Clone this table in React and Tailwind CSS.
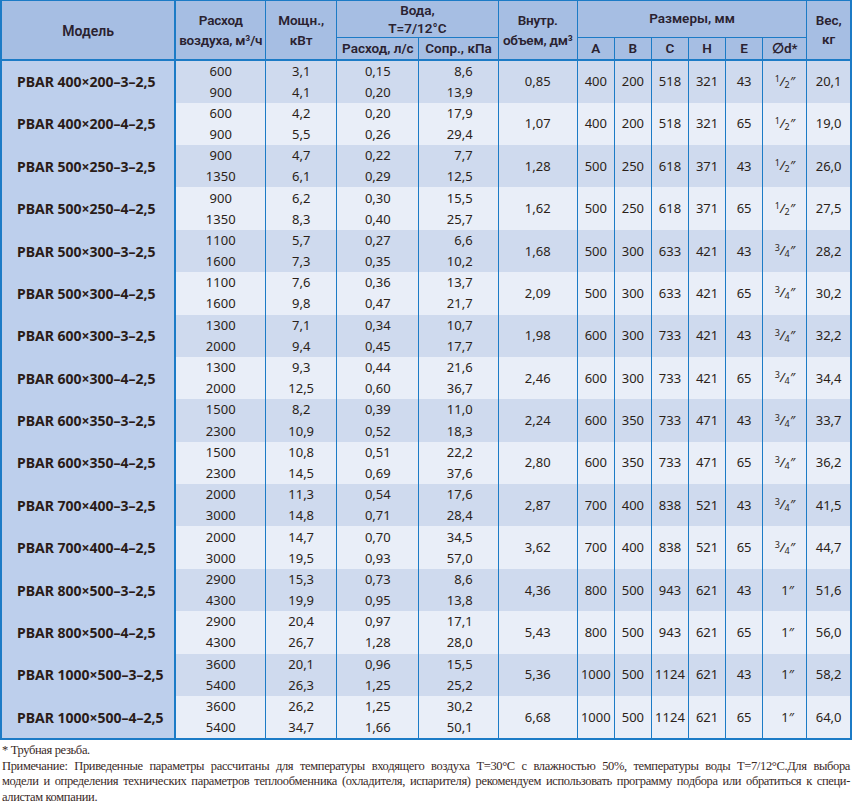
import React from 'react';

const HALF = ['1', '2'];
const QUARTER = ['3', '4'];
const INCH = 'inch';

const rows = [
  ['PBAR 400×200–3–2,5', ['600', '900'], ['3,1', '4,1'], ['0,15', '0,20'], ['8,6', '13,9'], '0,85', ['400', '200', '518', '321', '43'], HALF, '20,1'],
  ['PBAR 400×200–4–2,5', ['600', '900'], ['4,2', '5,5'], ['0,20', '0,26'], ['17,9', '29,4'], '1,07', ['400', '200', '518', '321', '65'], HALF, '19,0'],
  ['PBAR 500×250–3–2,5', ['900', '1350'], ['4,7', '6,1'], ['0,22', '0,29'], ['7,7', '12,5'], '1,28', ['500', '250', '618', '371', '43'], HALF, '26,0'],
  ['PBAR 500×250–4–2,5', ['900', '1350'], ['6,2', '8,3'], ['0,30', '0,40'], ['15,5', '25,7'], '1,62', ['500', '250', '618', '371', '65'], HALF, '27,5'],
  ['PBAR 500×300–3–2,5', ['1100', '1600'], ['5,7', '7,3'], ['0,27', '0,35'], ['6,6', '10,2'], '1,68', ['500', '300', '633', '421', '43'], QUARTER, '28,2'],
  ['PBAR 500×300–4–2,5', ['1100', '1600'], ['7,6', '9,8'], ['0,36', '0,47'], ['13,7', '21,7'], '2,09', ['500', '300', '633', '421', '65'], QUARTER, '30,2'],
  ['PBAR 600×300–3–2,5', ['1300', '2000'], ['7,1', '9,4'], ['0,34', '0,45'], ['10,7', '17,7'], '1,98', ['600', '300', '733', '421', '43'], QUARTER, '32,2'],
  ['PBAR 600×300–4–2,5', ['1300', '2000'], ['9,3', '12,5'], ['0,44', '0,60'], ['21,6', '36,7'], '2,46', ['600', '300', '733', '421', '65'], QUARTER, '34,4'],
  ['PBAR 600×350–3–2,5', ['1500', '2300'], ['8,2', '10,9'], ['0,39', '0,52'], ['11,0', '18,3'], '2,24', ['600', '350', '733', '471', '43'], QUARTER, '33,7'],
  ['PBAR 600×350–4–2,5', ['1500', '2300'], ['10,8', '14,5'], ['0,51', '0,69'], ['22,2', '37,6'], '2,80', ['600', '350', '733', '471', '65'], QUARTER, '36,2'],
  ['PBAR 700×400–3–2,5', ['2000', '3000'], ['11,3', '14,8'], ['0,54', '0,71'], ['17,6', '28,4'], '2,87', ['700', '400', '838', '521', '43'], QUARTER, '41,5'],
  ['PBAR 700×400–4–2,5', ['2000', '3000'], ['14,7', '19,5'], ['0,70', '0,93'], ['34,5', '57,0'], '3,62', ['700', '400', '838', '521', '65'], QUARTER, '44,7'],
  ['PBAR 800×500–3–2,5', ['2900', '4300'], ['15,3', '19,9'], ['0,73', '0,95'], ['8,6', '13,8'], '4,36', ['800', '500', '943', '621', '43'], INCH, '51,6'],
  ['PBAR 800×500–4–2,5', ['2900', '4300'], ['20,4', '26,7'], ['0,97', '1,28'], ['17,1', '28,0'], '5,43', ['800', '500', '943', '621', '65'], INCH, '56,0'],
  ['PBAR 1000×500–3–2,5', ['3600', '5400'], ['20,1', '26,3'], ['0,96', '1,25'], ['15,5', '25,2'], '5,36', ['1000', '500', '1124', '621', '43'], INCH, '58,2'],
  ['PBAR 1000×500–4–2,5', ['3600', '5400'], ['26,2', '34,7'], ['1,25', '1,66'], ['30,2', '50,1'], '6,68', ['1000', '500', '1124', '621', '65'], INCH, '64,0'],
];

// pipe thread size, drawn as a slanted fraction
const Thread = ({ value }) => {
  if (value === INCH) {
    return <span className="pl-[6px]">1″</span>;
  }
  return (
    <span>
      <span className="relative -top-[4px] text-[9px]">{value[0]}</span>
      <span className="italic">/</span>
      <span className="relative top-[2px] text-[9px]">{value[1]}</span>
      <span className="italic">″</span>
    </span>
  );
};

const th = 'border-r border-[#1c7bc6] text-center align-middle font-semibold p-0 whitespace-nowrap';
const td = 'border-r border-[#1c7bc6] text-center align-middle p-0';

export default function App() {
  return (
    <div className="w-[853px] bg-white text-[#2b1f18] font-['Noto_Sans',sans-serif]">
      {/* Table */}
      <table className="w-[852px] table-fixed border-collapse border-l-2 border-r-2 border-t border-b-2 border-[#1c7bc6] text-[13px]">
        <colgroup>
          <col className="w-[174px]" />
          <col className="w-[90px]" />
          <col className="w-[71px]" />
          <col className="w-[82px]" />
          <col className="w-[79px]" />
          <col className="w-[79px]" />
          <col className="w-[37px]" />
          <col className="w-[37px]" />
          <col className="w-[37px]" />
          <col className="w-[37px]" />
          <col className="w-[37px]" />
          <col className="w-[44px]" />
          <col className="w-[44px]" />
        </colgroup>
        <thead className="bg-[#a6bee3] font-['Roboto',sans-serif] text-[13.5px] text-[#2a2230]">
          <tr className="h-[37px]">
            <th rowSpan={2} className={th + ' border-r-2 border-b-2 pt-[3px] text-[14px]'}>Модель</th>
            <th rowSpan={2} className={th + ' border-b-2 leading-[20px] tracking-[-0.2px]'}>
              Расход<br />воздуха, м³/ч
            </th>
            <th rowSpan={2} className={th + ' border-b-2 leading-[20px]'}>
              Мощн.,<br />кВт
            </th>
            <th colSpan={2} className={th + ' border-b leading-[18px]'}>
              Вода,<br />T=7/12°C
            </th>
            <th rowSpan={2} className={th + ' border-b-2 leading-[20px] tracking-[-0.2px]'}>
              Внутр.<br />объем, дм³
            </th>
            <th colSpan={6} className={th + ' border-b pb-[2px]'}>Размеры, мм</th>
            <th rowSpan={2} className={th + ' border-b-2 leading-[19px]'}>
              Вес,<br />кг
            </th>
          </tr>
          <tr className="h-[22px] leading-none">
            <th className={th + ' border-b-2'}>Расход, л/с</th>
            <th className={th + ' border-b-2'}>Сопр., кПа</th>
            <th className={th + ' border-b-2'}>A</th>
            <th className={th + ' border-b-2'}>B</th>
            <th className={th + ' border-b-2'}>C</th>
            <th className={th + ' border-b-2'}>H</th>
            <th className={th + ' border-b-2'}>E</th>
            <th className={th + ' border-b-2 font-normal'}>∅d*</th>
          </tr>
        </thead>
        <tbody className="leading-[21px]">
          {rows.map((r, i) => {
            const bg = i % 2 === 0 ? 'bg-[#cfdaee]' : 'bg-[#e9eef8]';
            return (
              <React.Fragment key={r[0]}>
                <tr className={bg + ' h-[21.2px]'}>
                  <td rowSpan={2} className="border-r-2 border-[#1c7bc6] bg-[#bdcfec] pl-[15px] text-left align-middle text-[14px] font-bold text-[#2a1c18]">
                    {r[0]}
                  </td>
                  <td className={td}>{r[1][0]}</td>
                  <td className={td}>{r[2][0]}</td>
                  <td className={td}>{r[3][0]}</td>
                  <td className={td + ' text-right pr-[25px]'}>{r[4][0]}</td>
                  <td rowSpan={2} className={td}>{r[5]}</td>
                  {r[6].map((v, k) => (
                    <td key={k} rowSpan={2} className={td}>{v}</td>
                  ))}
                  <td rowSpan={2} className={td}><Thread value={r[7]} /></td>
                  <td rowSpan={2} className={td}>{r[8]}</td>
                </tr>
                <tr className={bg + ' h-[21.2px]'}>
                  <td className={td}>{r[1][1]}</td>
                  <td className={td}>{r[2][1]}</td>
                  <td className={td}>{r[3][1]}</td>
                  <td className={td + ' text-right pr-[25px]'}>{r[4][1]}</td>
                </tr>
              </React.Fragment>
            );
          })}
        </tbody>
      </table>

      {/* Notes */}
      <div className="pt-[3px] pl-[2px] pr-[3px] font-['Liberation_Serif',serif] text-[12.5px] leading-[15.5px] tracking-[-0.35px] text-[#3a2a1f]">
        <div>* Трубная резьба.</div>
        <div className="text-justify [text-align-last:justify] whitespace-nowrap">
          Примечание: Приведенные параметры рассчитаны для температуры входящего воздуха T=30°C с влажностью 50%, температуры воды T=7/12°C.Для выбора
        </div>
        <div className="text-justify [text-align-last:justify] whitespace-nowrap">
          модели и определения технических параметров теплообменника (охладителя, испарителя) рекомендуем использовать программу подбора или обратиться к специ-
        </div>
        <div>алистам компании.</div>
      </div>
    </div>
  );
}
